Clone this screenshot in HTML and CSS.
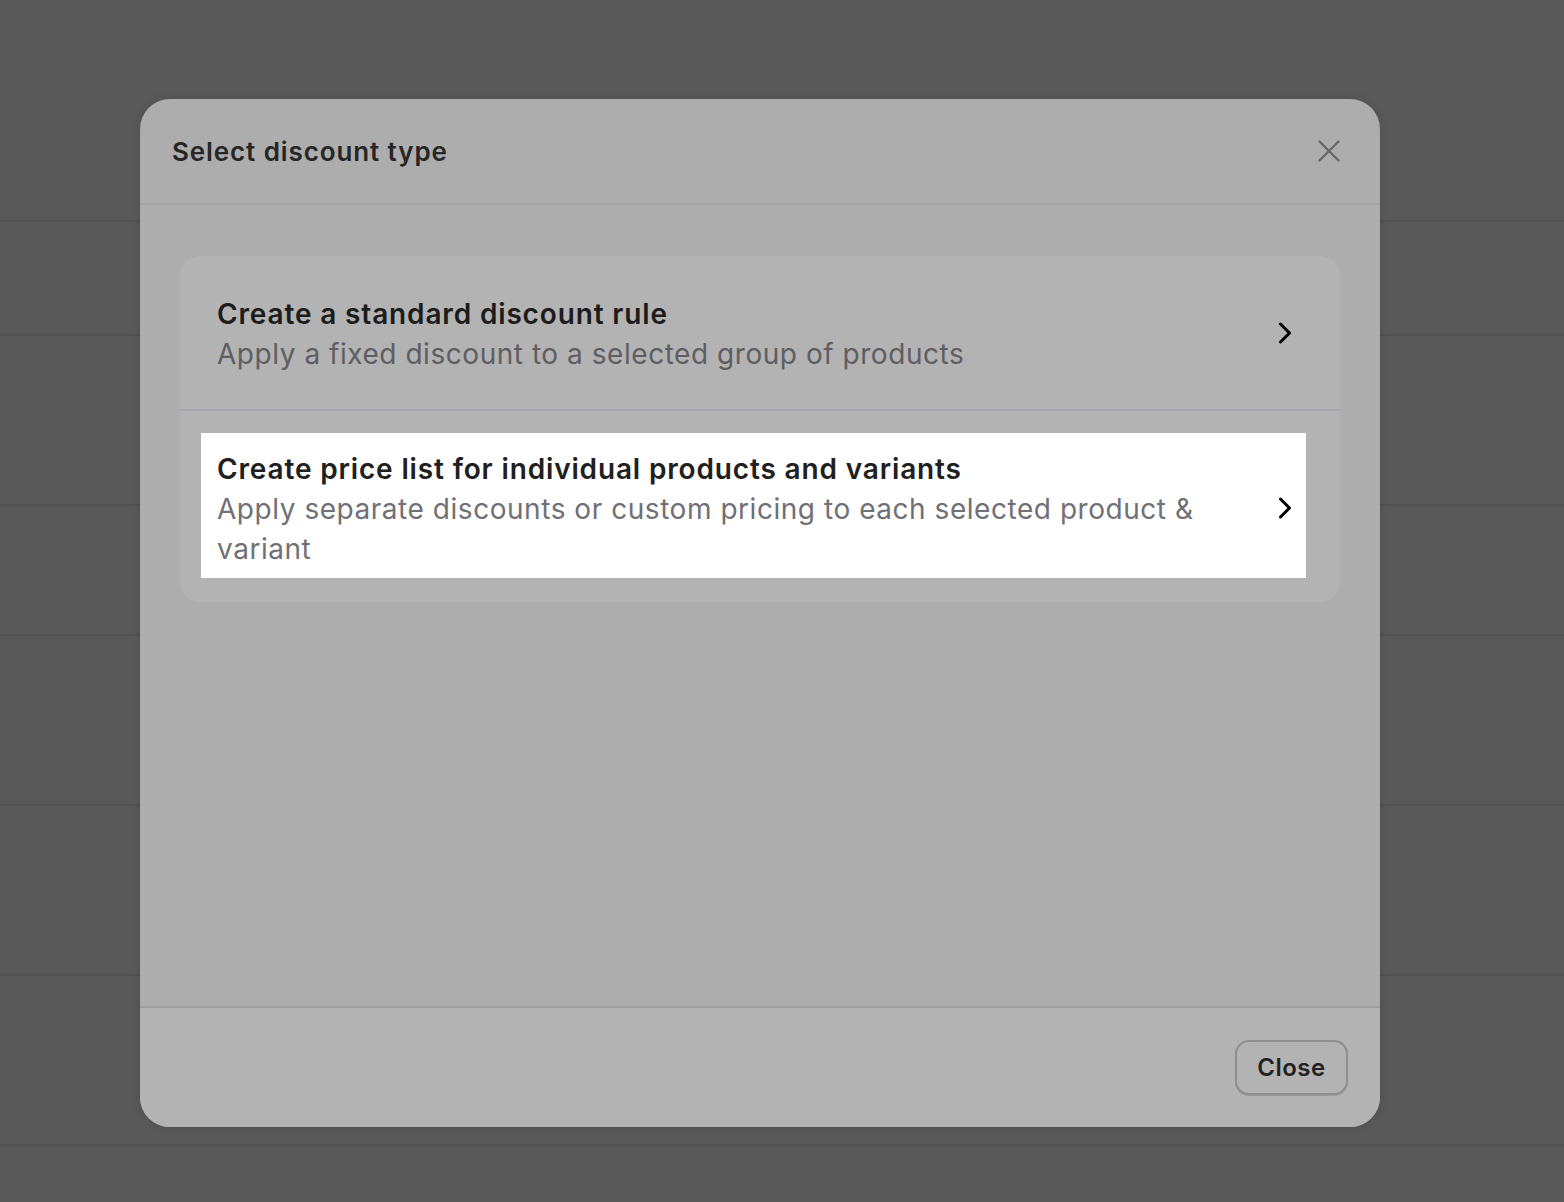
FILE: index.html
```html
<!DOCTYPE html>
<html lang="en">
<head>
<meta charset="utf-8">
<title>Select discount type</title>
<link rel="stylesheet" href="styles.css">
</head>
<body>
<div class="page">
  <div class="bg-row h221"></div>
  <div class="bg-row h114"></div>
  <div class="bg-row h170"></div>
  <div class="bg-row h130"></div>
  <div class="bg-row h170"></div>
  <div class="bg-row h170"></div>
  <div class="bg-row h170"></div>
  <div class="bg-row last"></div>
</div>

<div class="modal">
  <div class="modal-header">
    <h2 class="modal-title">Select discount type</h2>
    <button class="icon-close" aria-label="Close">
      <svg width="22" height="22" viewBox="0 0 22 22"><path d="M1.5 1.5 L20.5 20.5 M20.5 1.5 L1.5 20.5" stroke="#666666" stroke-width="2.2" stroke-linecap="round" fill="none"/></svg>
    </button>
  </div>
  <div class="modal-body">
    <div class="options">
      <div class="option">
        <div class="option-text">
          <div class="option-title">Create a standard discount rule</div>
          <div class="option-desc">Apply a fixed discount to a selected group of products</div>
        </div>
        <svg class="chevron" width="14" height="22" viewBox="0 0 14 22"><path d="M2.5 2 L11.5 11 L2.5 20" stroke="#000" stroke-width="3" stroke-linecap="round" stroke-linejoin="round" fill="none"/></svg>
      </div>
      <div class="option option-highlight">
        <div class="highlight-box">
          <div class="option-text">
            <div class="option-title">Create price list for individual products and variants</div>
            <div class="option-desc">Apply separate discounts or custom pricing to each selected product &amp; variant</div>
          </div>
          <svg class="chevron" width="14" height="22" viewBox="0 0 14 22"><path d="M2.5 2 L11.5 11 L2.5 20" stroke="#000" stroke-width="3" stroke-linecap="round" stroke-linejoin="round" fill="none"/></svg>
        </div>
      </div>
    </div>
  </div>
  <div class="modal-footer">
    <button class="btn">Close</button>
  </div>
</div>
</body>
</html>
```
FILE: styles.css
```css
* { box-sizing: border-box; }
html, body { margin: 0; padding: 0; }
body {
  background: #595959;
  font-family: Inter, "Noto Sans", "Liberation Sans", sans-serif;
  width: 1564px;
  height: 1202px;
  overflow: hidden;
  position: relative;
}
.page { display: flex; flex-direction: column; }
.bg-row { border-bottom: 2px solid #515151; }
.bg-row.last { border-bottom: none; height: 60px; }
.h221 { height: 222px; }
.h114 { height: 114px; }
.h170 { height: 170px; }
.h130 { height: 130px; }

.modal {
  position: absolute;
  left: 140px;
  top: 99px;
  width: 1240px;
  height: 1028px;
  background: #adadad;
  border-radius: 30px;
  overflow: hidden;
  display: flex;
  flex-direction: column;
  box-shadow: 0 0 10px rgba(0,0,0,0.12);
}
.modal-header {
  height: 106px;
  display: flex;
  align-items: center;
  justify-content: space-between;
  padding: 0 40px 0 32px;
  border-bottom: 2px solid #a3a3a3;
}
.modal-title {
  margin: 0;
  font-size: 26px;
  font-weight: 600;
  color: #262626;
  letter-spacing: 0.9px;
}
.icon-close {
  border: none;
  background: none;
  padding: 0;
  width: 22px;
  height: 22px;
  display: flex;
}
.modal-body {
  flex: 1;
  padding: 51px 40px;
}
.options {
  background: #b3b3b3;
  border-radius: 20px;
  display: flex;
  flex-direction: column;
}
.option {
  display: flex;
  align-items: center;
  padding: 38px 48px 35px 37px;
  border-bottom: 2px solid #a5a5ab;
}
.option-highlight {
  border-bottom: none;
  padding: 22px 34px 24px 21px;
}
.highlight-box {
  background: #ffffff;
  flex: 1;
  display: flex;
  align-items: center;
  padding: 16px 14px 9px 16px;
}
.option-text { flex: 1; padding-right: 40px; }
.option-title {
  font-size: 28px;
  line-height: 40px;
  font-weight: 600;
  color: #1c1c1c;
  letter-spacing: 0.85px;
}
.option-desc {
  font-size: 28px;
  line-height: 40px;
  color: #5e5e62;
  letter-spacing: 0.54px;
}
.highlight-box .option-title { color: #202020; }
.highlight-box .option-desc { color: #707076; }
.chevron { flex: none; margin-bottom: 3px; }

.modal-footer {
  height: 121px;
  background: #b3b3b3;
  border-top: 2px solid #a0a0a0;
  display: flex;
  align-items: flex-start;
  justify-content: flex-end;
  padding: 32px 32px 0 0;
}
.btn {
  width: 113px;
  height: 55px;
  border: 2px solid #8f8f8f;
  border-radius: 14px;
  background: #b3b3b3;
  font-family: inherit;
  font-size: 24px;
  font-weight: 600;
  color: #222;
  letter-spacing: 0.5px;
  box-shadow: 0 1px 0 #9a9a9a;
}
```
